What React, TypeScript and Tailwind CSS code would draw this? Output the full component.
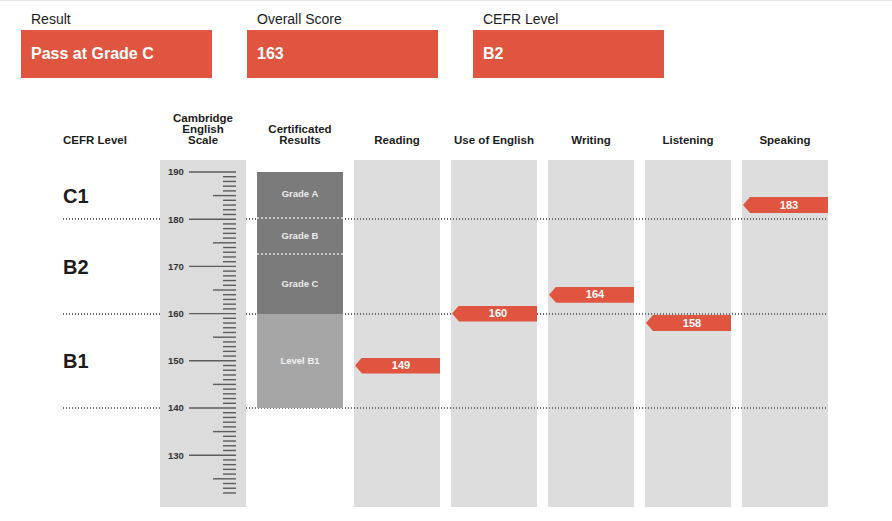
import React from 'react';

// ===========================================
// DATA
// ===========================================

const summary = [
  { label: 'Result', value: 'Pass at Grade C' },
  { label: 'Overall Score', value: '163' },
  { label: 'CEFR Level', value: 'B2' },
];

const skills = [
  { name: 'Reading', score: 149 },
  { name: 'Use of English', score: 160 },
  { name: 'Writing', score: 164 },
  { name: 'Listening', score: 158 },
  { name: 'Speaking', score: 183 },
];

// vertical position (px from top of chart body) of a scale score
const PX_PER_POINT = 4.72;
const TOP_OFFSET = 12;
const yFor = (score: number) => TOP_OFFSET + (190 - score) * PX_PER_POINT;

const ticks = Array.from({ length: 69 }, (_, i) => 190 - i); // 190 .. 122

// ===========================================
// PIECES
// ===========================================

function ScaleRuler() {
  return (
    <svg width="86" height="347" viewBox="0 0 86 347">
      {ticks.map((s) => {
        const y = yFor(s);
        const x1 = s % 10 === 0 ? 29 : s % 5 === 0 ? 53 : 63;
        return (
          <g key={s}>
            <line x1={x1} x2={76} y1={y} y2={y} stroke="#5c5c5c" strokeWidth={1.4} />
            {s % 10 === 0 && (
              <text
                x={8}
                y={y + 3.4}
                fontSize="9.5"
                fontWeight="700"
                fill="#333"
                fontFamily="'Liberation Sans', Arial, sans-serif"
              >
                {s}
              </text>
            )}
          </g>
        );
      })}
    </svg>
  );
}

function DottedLine({ score }: { score: number }) {
  return (
    <div
      className="absolute left-0 right-0 z-10 h-[2px] bg-[linear-gradient(90deg,#6b6b6b_50%,transparent_50%)] bg-[length:3px_2px]"
      style={{ top: yFor(score) - 1 }}
    />
  );
}

// ===========================================
// COMPONENT
// ===========================================

export default function App() {
  return (
    <div className="min-h-[521px] w-[892px] border-t border-[#e6e6e6] bg-white font-['Liberation_Sans',Arial,sans-serif] text-[#1c1c1c]">
      {/* Summary boxes */}
      <div className="flex gap-[35px] pl-[21px] pt-[10px]">
        {summary.map((item) => (
          <div key={item.label} className="w-[191px]">
            <p className="pl-[10px] text-[14px] leading-[16px]">{item.label}</p>
            <div className="mt-[3px] flex h-[48px] items-center bg-[#e05540] pl-[10px] text-[16px] font-bold text-white">
              {item.value}
            </div>
          </div>
        ))}
      </div>

      {/* Chart */}
      <div className="pl-[63px]">
        {/* Headers */}
        <div className="mt-[35px] grid grid-cols-[repeat(8,86px)] items-end gap-x-[11px] text-[11.5px] font-bold leading-[11px]">
          <div className="whitespace-nowrap">CEFR Level</div>
          <div className="text-center">Cambridge<br />English<br />Scale</div>
          <div className="text-center">Certificated<br />Results</div>
          {skills.map((s) => (
            <div key={s.name} className="whitespace-nowrap text-center">{s.name}</div>
          ))}
        </div>

        {/* Body */}
        <div className="relative mt-[14px] grid h-[347px] w-[765px] grid-cols-[repeat(8,86px)] gap-x-[11px]">
          <DottedLine score={180} />
          <DottedLine score={160} />
          <DottedLine score={140} />

          {/* CEFR levels */}
          <div className="flex flex-col text-[20px] font-bold">
            <div className="h-[12px]" />
            <div className="flex h-[47px] items-center">C1</div>
            <div className="flex h-[95px] items-center">B2</div>
            <div className="flex h-[94px] items-center">B1</div>
          </div>

          {/* Cambridge English Scale */}
          <div className="relative z-20 bg-[#dcdcdc]">
            <ScaleRuler />
          </div>

          {/* Certificated results */}
          <div className="relative z-20 flex flex-col text-[9.5px] font-bold text-[#ececec]">
            <div className="h-[12px]" />
            <div className="flex h-[47px] items-center justify-center border-b-2 border-dotted border-[#c8c8c8] bg-[#7b7b7b]">Grade A</div>
            <div className="flex h-[36px] items-center justify-center border-b-2 border-dotted border-[#c8c8c8] bg-[#7b7b7b]">Grade B</div>
            <div className="flex h-[59px] items-center justify-center bg-[#7b7b7b]">Grade C</div>
            <div className="flex h-[94px] items-center justify-center bg-[#a6a6a6] text-[#f2f2f2]">Level B1</div>
          </div>

          {/* Skill columns */}
          {skills.map((s) => (
            <div key={s.name} className="relative bg-[#dddddd]">
              <div
                className="absolute left-[1px] right-0 z-30 flex h-[16px] items-center justify-center bg-[#e05540] pl-[7px] text-[11px] font-bold text-white [clip-path:polygon(7px_0,100%_0,100%_100%,7px_100%,0_50%)]"
                style={{ top: yFor(s.score) - 8 }}
              >
                {s.score}
              </div>
            </div>
          ))}
        </div>
      </div>
    </div>
  );
}
